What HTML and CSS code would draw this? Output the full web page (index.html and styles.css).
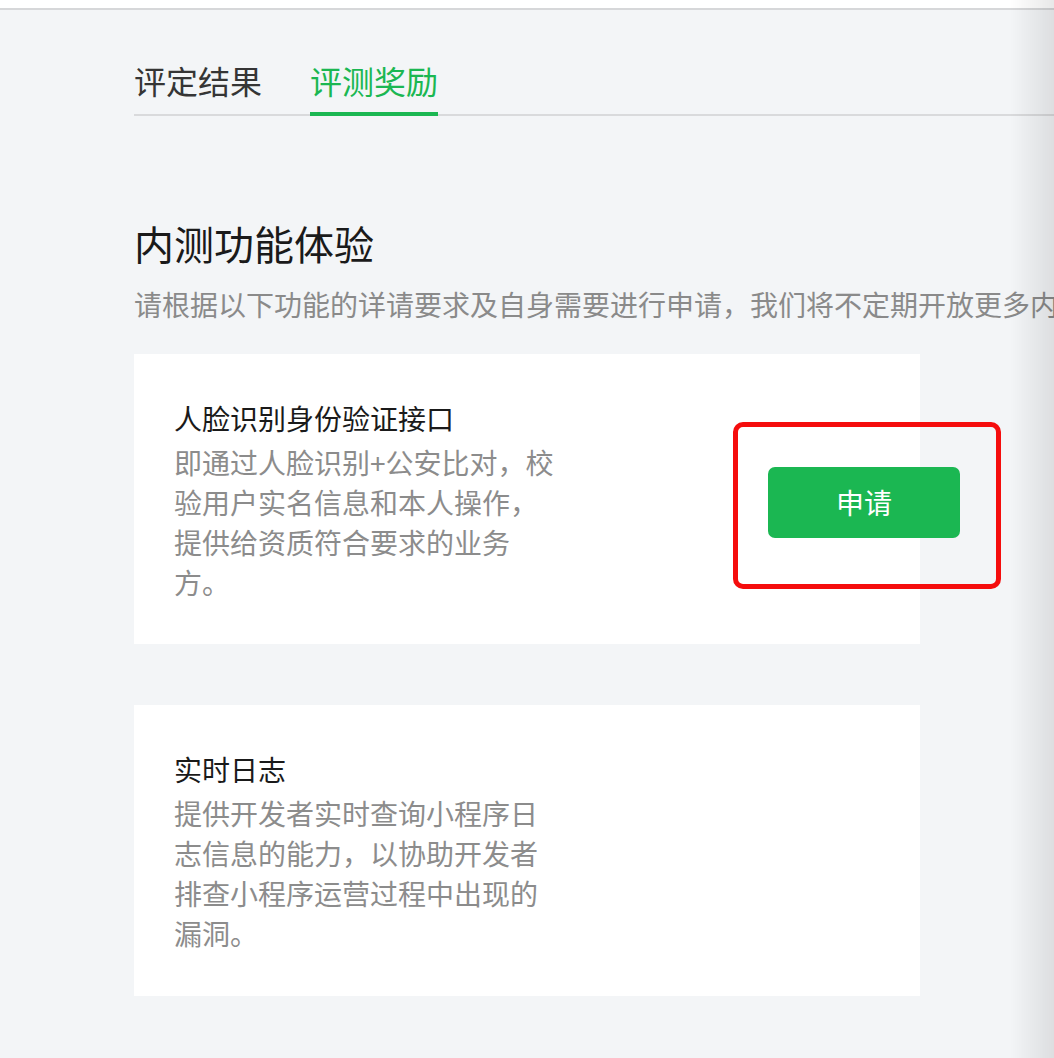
FILE: index.html
```html
<!DOCTYPE html>
<html lang="zh-CN">
<head>
<meta charset="utf-8">
<title>评测奖励</title>
<link rel="stylesheet" href="styles.css">
</head>
<body>
<div class="topbar"></div>
<main class="page">
  <nav class="tabs">
    <span class="tab">评定结果</span>
    <span class="tab tab-active">评测奖励</span>
  </nav>
  <h1 class="title">内测功能体验</h1>
  <p class="subtitle">请根据以下功能的详请要求及自身需要进行申请，我们将不定期开放更多内</p>
  <section class="card card-first">
    <div class="card-text">
      <h2 class="card-title">人脸识别身份验证接口</h2>
      <p class="card-desc">即通过人脸识别+公安比对，校验用户实名信息和本人操作，提供给资质符合要求的业务方。</p>
    </div>
    <button class="btn">申请</button>
    <div class="highlight"></div>
  </section>
  <section class="card card-second">
    <div class="card-text">
      <h2 class="card-title">实时日志</h2>
      <p class="card-desc">提供开发者实时查询小程序日志信息的能力，以协助开发者排查小程序运营过程中出现的漏洞。</p>
    </div>
  </section>
</main>
<div class="edge-shade"></div>
</body>
</html>
```

FILE: styles.css
```css
html, body {
  margin: 0;
  padding: 0;
  overflow: hidden;
}
body {
  background: #f3f5f7;
  font-family: "Noto Sans CJK SC", "Noto Sans", sans-serif;
  height: 1058px;
  position: relative;
}
.topbar {
  height: 8px;
  background: #ffffff;
  border-bottom: 2px solid #d6d7d9;
}
.page {
  padding-left: 134px;
}
.tabs {
  display: flex;
  gap: 48px;
  margin-top: 48px;
  border-bottom: 2px solid #d9dadc;
}
.tab {
  font-size: 32px;
  line-height: 44px;
  color: #353535;
  padding-bottom: 10px;
  margin-bottom: -2px;
  border-bottom: 4px solid transparent;
}
.tab-active {
  color: #1bb752;
  border-bottom-color: #1bb752;
}
.title {
  margin: 99px 0 0;
  font-size: 40px;
  line-height: 56px;
  font-weight: 400;
  color: #1a1a1a;
}
.subtitle {
  margin: 13px 0 0;
  font-size: 28px;
  line-height: 40px;
  color: #8a8a8a;
  white-space: nowrap;
}
.card {
  position: relative;
  width: 706px;
  margin-top: 30px;
  padding: 40px;
  background: #ffffff;
  display: flex;
  align-items: center;
  gap: 209px;
}
.card-first {
  padding-bottom: 42px;
}
.card-second {
  margin-top: 61px;
  padding-bottom: 43px;
}
.card-text {
  width: 385px;
  flex-shrink: 0;
}
.card-title {
  margin: 0;
  font-size: 28px;
  line-height: 48px;
  font-weight: 400;
  color: #1a1a1a;
}
.card-desc {
  margin: 0;
  font-size: 28px;
  line-height: 40px;
  color: #8c8c8c;
}
.btn {
  flex-shrink: 0;
  width: 192px;
  height: 71px;
  margin-top: 8px;
  border: none;
  border-radius: 7px;
  background: #1bb752;
  color: #ffffff;
  font-family: "Noto Sans CJK SC", "Noto Sans", sans-serif;
  font-size: 28px;
  padding: 0;
}
.highlight {
  position: absolute;
  left: 599px;
  top: 68px;
  width: 258px;
  height: 157px;
  border: 5px solid #f50d0d;
  border-radius: 10px;
}
.edge-shade {
  position: fixed;
  top: 0;
  right: 0;
  bottom: 0;
  width: 44px;
  background: linear-gradient(to right, rgba(0,0,0,0), rgba(0,0,0,0.09));
  pointer-events: none;
}
```
